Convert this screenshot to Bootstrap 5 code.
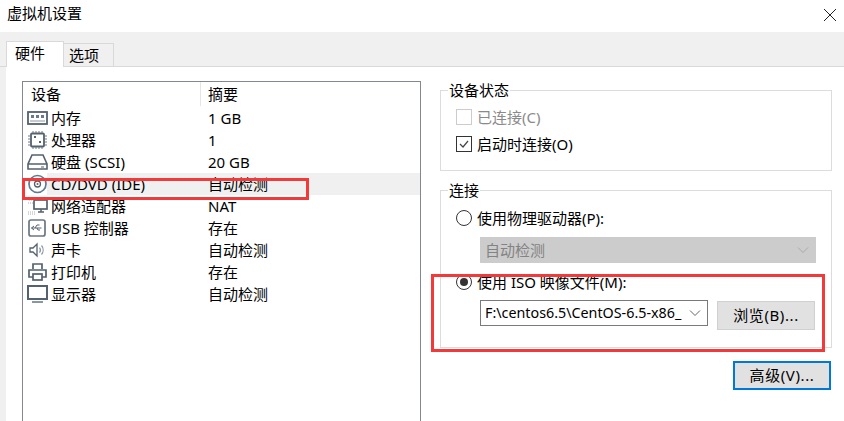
<!DOCTYPE html>
<html lang="zh-CN">
<head>
<meta charset="utf-8">
<title>虚拟机设置</title>
<link href="https://cdn.jsdelivr.net/npm/bootstrap@5.3.0/dist/css/bootstrap.min.css" rel="stylesheet">
<style>
html,body{width:844px;height:421px;overflow:hidden;background:#fff;}
body{font-family:"Noto Sans","Noto Sans CJK SC",sans-serif;font-size:15px;line-height:18px;color:#000;}
.vm-win{width:844px;height:421px;position:relative;}
.vm-title{height:32px;padding:4px 7px 0;}
.vm-close{margin:4px 0 0;}
.vm-tabs{height:35px;background:#f0f0f0;padding:9px 0 0 6px;border-bottom:1px solid #d9d9d9;}
.vm-tabs .nav-link{border:1px solid #d9d9d9;border-radius:0;color:#000;background:#f0f0f0;padding:0 0 0 5px;width:51px;height:23px;line-height:22px;text-align:left;margin:2px 0 0 -1px;font-size:15px;border-bottom:0;}
.vm-tabs .nav-link.active{background:#fff;width:58px;height:26px;margin:0;padding-left:8px;line-height:22px;position:relative;z-index:1;}
.vm-body{height:354px;padding-left:6px;background:#f0f0f0;}
.vm-inner{background:#fff;padding:14px 12px 0 16px;gap:19px;}
.vm-list{width:399px;height:345px;border:1px solid #828790;border-bottom:0;flex:none;}
.vm-head{height:25px;padding-top:3px;}
.vm-c1{width:177px;padding-left:8px;}
.vm-c2{padding-left:7px;border-left:1px solid #e5e5e5;height:24px;margin-top:-3px;padding-top:3px;}
.vm-row{height:22px;line-height:21px;padding-top:1px;}
.vm-row.vm-sel{background:linear-gradient(90deg,#fff 24px,#f0f0f0 24px);}
.vm-name{width:178px;padding-left:4px;white-space:nowrap;}
.vm-name svg{width:21px;height:20px;flex:none;margin-right:3px;margin-top:-1px;}
.vm-sum{padding-left:7px;white-space:nowrap;}
.vm-right{width:392px;flex:none;}
.vm-set{border:1px solid #dcdcdc;margin:0;padding:0 0 0 15px;}
.vm-set legend{float:none;width:auto;font-size:15px;line-height:18px;margin:0 0 0 -8px;padding:0 1px;}
.vm-set1{height:90px;}
.vm-set2{height:167px;margin-top:10px;}
.vm-check{width:16px;height:16px;margin:0 5px 0 0;border:1px solid #333;background:#fff;flex:none;display:block;}
.vm-check-off{border-color:#ccc;}
.vm-off{color:#8a8a8a;}
.vm-line{height:24px;}
.vm-first{margin-top:6px;}
.vm-next{margin-top:3px;}
.vm-radio{width:16px;height:16px;margin:0 5px 0 0;border:1px solid #333;border-radius:50%;background:#fff;flex:none;position:relative;}
.vm-radio.on::after{content:"";position:absolute;left:3px;top:3px;width:8px;height:8px;border-radius:50%;background:#333;}
.vm-pick{height:26px;border-radius:0;font-size:14.3px;line-height:18px;padding:0 4px;color:#000;background-position:right 6px center;background-size:12px 8px;background-image:url("data:image/svg+xml,%3Csvg xmlns='http://www.w3.org/2000/svg' viewBox='0 0 12 8'%3E%3Cpath d='M1 1.500l5 5 5-5' fill='none' stroke='%23666' stroke-width='1'/%3E%3C/svg%3E");}
.vm-pick1{width:336px;margin-left:24px;margin-top:7px;border:1px solid #ccc;font-size:15px;}
.vm-pick1:disabled{background-color:#ccc;color:#838383;background-image:url("data:image/svg+xml,%3Csvg xmlns='http://www.w3.org/2000/svg' viewBox='0 0 12 8'%3E%3Cpath d='M1 1.500l5 5 5-5' fill='none' stroke='%23aaa' stroke-width='1'/%3E%3C/svg%3E");}
.vm-pick2{width:228px;margin-left:24px;border:1px solid #7a7a7a;padding-right:0;}
.vm-btn{width:98px;height:29px;padding:0 0 2px;border-radius:0;background:#e1e1e1;border:1px solid #d0d0d0;color:#000;font-size:15px;line-height:18px;letter-spacing:.6px;}
.vm-btn2{margin-left:9px;margin-top:1px;}
.vm-adv{border:2px solid #0078d7;height:29px;margin:13px 1px 0 auto;display:block;}
.vm-line2{margin-top:7px;}
.vm-pair{margin-top:6px;}
.vm-mark{position:absolute;border:3px solid #f33a3a;pointer-events:none;z-index:5;}
.vm-mark1{left:22px;top:178px;width:287px;height:22px;}
.vm-mark2{left:431px;top:274px;width:394px;height:78px;}
</style>
</head>
<body>
<div class="vm-win">
  <div class="vm-title d-flex justify-content-between">
    <span>虚拟机设置</span>
    <svg class="vm-close" width="14" height="14" viewBox="0 0 14 14"><path d="M1 1l12 12M13 1L1 13" stroke="#222" stroke-width="1" fill="none"/></svg>
  </div>
  <ul class="nav vm-tabs">
    <li class="nav-item"><a class="nav-link active" href="#">硬件</a></li>
    <li class="nav-item"><a class="nav-link" href="#">选项</a></li>
  </ul>
  <div class="vm-body">
    <div class="vm-inner d-flex h-100">
      <div class="vm-list">
        <div class="vm-head d-flex"><div class="vm-c1">设备</div><div class="vm-c2">摘要</div></div>
        <div class="vm-row d-flex"><div class="vm-name d-flex align-items-center">
          <svg viewBox="0 0 21 20"><rect x="1" y="4" width="19" height="12" fill="none" stroke="#54616e" stroke-width="1.800"/><path d="M4 7h3v3H4zM9 7h3v3H9zM14 7h3v3h-3z" fill="#6d7a86"/><path d="M3 13h15" stroke="#8a96a1"/></svg>内存</div><div class="vm-sum">1 GB</div></div>
        <div class="vm-row d-flex"><div class="vm-name d-flex align-items-center">
          <svg viewBox="0 0 21 20"><rect x="4" y="3.5" width="13" height="13" rx="1" fill="none" stroke="#54616e" stroke-width="1.800"/><path d="M6 1v2M9 1v2M12 1v2M15 1v2M6 17v2M9 17v2M12 17v2M15 17v2M1 6h2M1 9h2M1 12h2M1 15h2M18 6h2M18 9h2M18 12h2M18 15h2" stroke="#6d7a86"/><path d="M7 6h2v2H7zM12 11h2v2h-2z" fill="#54616e"/></svg>处理器</div><div class="vm-sum">1</div></div>
        <div class="vm-row d-flex"><div class="vm-name d-flex align-items-center">
          <svg viewBox="0 0 21 20"><path d="M5 3h11l4 9v5H1v-5zM1 12h19" fill="none" stroke="#54616e" stroke-width="1.600"/><path d="M14 15h3" stroke="#54616e"/></svg>硬盘 (SCSI)</div><div class="vm-sum">20 GB</div></div>
        <div class="vm-row vm-sel d-flex"><div class="vm-name d-flex align-items-center">
          <svg viewBox="0 0 21 20"><circle cx="10.500" cy="10" r="8.500" fill="#fff" stroke="#5d7a96" stroke-width="1.700"/><circle cx="10.500" cy="10" r="3" fill="none" stroke="#54616e" stroke-width="1.300"/><circle cx="10.500" cy="10" r="1" fill="#54616e"/></svg>CD/DVD (IDE)</div><div class="vm-sum">自动检测</div></div>
        <div class="vm-row d-flex"><div class="vm-name d-flex align-items-center">
          <svg viewBox="0 0 21 20"><rect x="7" y="4" width="13" height="9" fill="#fff" stroke="#54616e" stroke-width="1.700"/><path d="M11 16h6M14 13v3" stroke="#54616e" stroke-width="1.500"/><path d="M1 2h6v2H1zM1 7h5M1 16h7M1 18h7" stroke="#a6afb7" stroke-dasharray="1 1" fill="none"/></svg>网络适配器</div><div class="vm-sum">NAT</div></div>
        <div class="vm-row d-flex"><div class="vm-name d-flex align-items-center">
          <svg viewBox="0 0 21 20"><rect x="2" y="2" width="16" height="16" rx="2" fill="none" stroke="#6c7782" stroke-width="1.700"/><path d="M4.500 10h10M4.500 10l2.500-2M4.500 10l2.500 2M8 10l2-3h2.500M10 10l1 2h2" fill="none" stroke="#54616e"/></svg>USB 控制器</div><div class="vm-sum">存在</div></div>
        <div class="vm-row d-flex"><div class="vm-name d-flex align-items-center">
          <svg viewBox="0 0 21 20"><path d="M3 8h3l4-4v12l-4-4H3z" fill="none" stroke="#54616e" stroke-width="1.300"/><path d="M12.500 7.500a4 4 0 0 1 0 5M14.500 5.500a7 7 0 0 1 0 9" fill="none" stroke="#8a96a1" stroke-width="1.200"/></svg>声卡</div><div class="vm-sum">自动检测</div></div>
        <div class="vm-row d-flex"><div class="vm-name d-flex align-items-center">
          <svg viewBox="0 0 21 20"><path d="M6 7V2h9v5M6 15H2V8h17v7h-4" fill="none" stroke="#54616e" stroke-width="1.700"/><rect x="6" y="12" width="9" height="6" fill="#fff" stroke="#54616e" stroke-width="1.700"/></svg>打印机</div><div class="vm-sum">存在</div></div>
        <div class="vm-row d-flex"><div class="vm-name d-flex align-items-center">
          <svg viewBox="0 0 21 20"><rect x="1" y="2" width="19" height="13" fill="none" stroke="#54616e" stroke-width="2"/><path d="M5 18h11" stroke="#8a96a1" stroke-width="2"/></svg>显示器</div><div class="vm-sum">自动检测</div></div>
      </div>
      <div class="vm-right">
        <fieldset class="vm-set vm-set1">
          <legend>设备状态</legend>
          <div class="vm-line vm-off vm-first d-flex align-items-center"><span class="vm-check vm-check-off"></span>已连接(C)</div>
          <div class="vm-line vm-next d-flex align-items-center"><svg class="vm-check" viewBox="0 0 14 14"><path d="M3 7l3 3 5-6" fill="none" stroke="#444" stroke-width="1.200"/></svg>启动时连接(O)</div>
        </fieldset>
        <fieldset class="vm-set vm-set2">
          <legend>连接</legend>
          <div class="vm-line d-flex align-items-center" style="margin-top:7px"><span class="vm-radio"></span>使用物理驱动器(P):</div>
          <select class="form-select vm-pick vm-pick1" disabled><option>自动检测</option></select>
          <div class="vm-line vm-line2 d-flex align-items-center"><span class="vm-radio on"></span>使用 ISO 映像文件(M):</div>
          <div class="vm-pair d-flex align-items-start">
            <select class="form-select vm-pick vm-pick2"><option>F:\centos6.5\CentOS-6.5-x86_</option></select>
            <button type="button" class="btn vm-btn vm-btn2">浏览(B)...</button>
          </div>
        </fieldset>
        <button type="button" class="btn vm-btn vm-adv">高级(V)...</button>
      </div>
    </div>
  </div>
  <div class="vm-mark vm-mark1"></div>
  <div class="vm-mark vm-mark2"></div>
</div>
<script src="https://cdn.jsdelivr.net/npm/bootstrap@5.3.0/dist/js/bootstrap.bundle.min.js"></script>
</body>
</html>
